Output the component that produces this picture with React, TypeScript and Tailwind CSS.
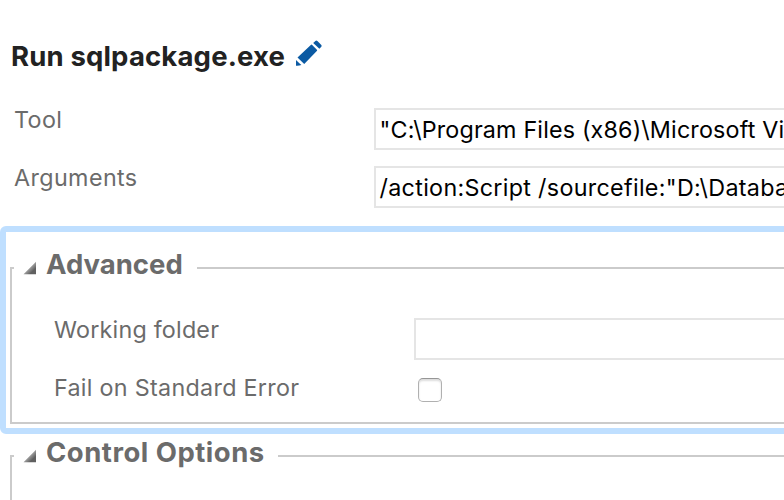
import type { ReactNode } from "react";

function PencilIcon() {
  return (
    <svg width="28" height="28" viewBox="0 0 28 28" fill="#0b5aa3" className="ml-[10px] mt-[1px] shrink-0">
      <path d="M1 26.8V21Q3.6 23.6 6.4 26.1Q4 27 1 26.8Z" />
      <path d="M2.5 18.6 15.8 5.9Q16.5 5.3 17.2 6L21.9 10.7Q22.5 11.4 21.8 12.1L9.2 24.9Z" />
      <path d="M18.2 3.9 20.4 1.9Q21.4 1.1 22.4 2L26.3 5.9Q27.1 6.8 26.3 7.7L24.4 9.7Z" />
    </svg>
  );
}

function Triangle() {
  return (
    <svg width="14" height="14" viewBox="0 0 14 14" className="mr-[9px] mt-[10px] shrink-0">
      <defs>
        <linearGradient id="tri" x1="0" y1="0" x2="1" y2="1">
          <stop offset="0.4" stopColor="#b8b8b8" />
          <stop offset="0.75" stopColor="#606060" />
        </linearGradient>
      </defs>
      <path d="M0.5 13.2 13 0.8V13.2Z" fill="url(#tri)" />
    </svg>
  );
}

function Row({ label, spacing, children }: { label: string; spacing: string; children: ReactNode }) {
  return (
    <div className="flex h-[58px] items-start">
      <label className={`w-[360px] shrink-0 leading-[31px] text-[#6b6b6b] ${spacing}`}>{label}</label>
      {children}
    </div>
  );
}

function TextBox({ text = "", spacing = "" }: { text?: string; spacing?: string }) {
  return (
    <div className={`mt-1 h-[42px] w-[600px] shrink-0 border-2 border-[#e5e5e5] bg-white leading-[39px] text-black ${spacing}`}>
      {text}
    </div>
  );
}

function Section({ title, className, legendClass, children }: { title: string; className: string; legendClass: string; children?: ReactNode }) {
  return (
    <fieldset className={`w-[900px] border-2 border-[#cbcbcb] pl-[2px] ${className}`}>
      <legend className={`h-[34px] pl-[9px] text-[27.5px] font-bold text-[#6b6b6b] ${legendClass}`}>
        <div className="flex items-start leading-[26px]">
          <Triangle />
          {title}
        </div>
      </legend>
      {children}
    </fieldset>
  );
}

export default function App() {
  return (
    <main className="h-[500px] w-full overflow-hidden whitespace-nowrap bg-white font-['Inter','Liberation_Sans',sans-serif] text-[23.3px]">
      <header className="flex h-[104px] items-start pl-[11px] pt-[38px]">
        <h1 className="text-[27.5px] font-bold leading-[36px] tracking-[0.16px] text-[#222]">Run sqlpackage.exe</h1>
        <PencilIcon />
      </header>
      <div className="h-[122px] pl-[14px]">
        <Row label="Tool" spacing="tracking-[0.35px]">
          <TextBox text={'"C:\\Program Files (x86)\\Microsoft Vi'} spacing="pl-[3.5px] tracking-[0.17px]" />
        </Row>
        <Row label="Arguments" spacing="tracking-[0.4px]">
          <TextBox text={'/action:Script /sourcefile:"D:\\Databa'} spacing="pl-[3.5px] tracking-[0.31px]" />
        </Row>
      </div>
      <div className="h-[208px] w-[920px] rounded-[6px] border-[6px] border-[#bfdfff] pl-1 pt-[19px]">
        <Section title="Advanced" className="h-[173px]" legendClass="w-[183px]">
          <div className="pl-[40px] pt-[29px]">
            <Row label="Working folder" spacing="tracking-[0.22px]">
              <TextBox />
            </Row>
            <Row label="Fail on Standard Error" spacing="tracking-[0.3px]">
              <span className="ml-1 mt-[6px] size-6 rounded-[5px] border border-[#b0b0b0] border-t-[#969696] bg-white shadow-[inset_0_2px_2px_#dddddd]" />
            </Row>
          </div>
        </Section>
      </div>
      <div className="pl-[10px] pt-[5px]">
        <Section title="Control Options" className="h-[140px] tracking-[0.5px]" legendClass="w-[264px]" />
      </div>
    </main>
  );
}
